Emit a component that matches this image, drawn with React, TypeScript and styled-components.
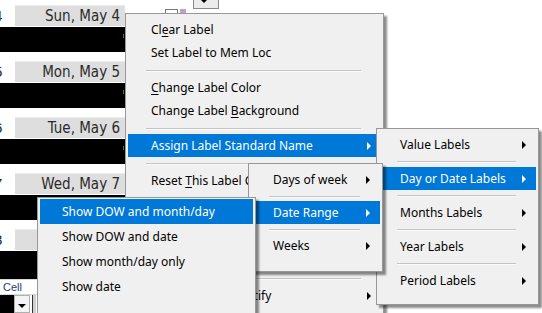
import styled, { createGlobalStyle } from "styled-components";

const GlobalStyle = createGlobalStyle`
  html, body {
    margin: 0;
    padding: 0;
    background: #fff;
  }
  body {
    font-family: "Noto Sans", sans-serif;
    overflow: hidden;
  }
`;

const Page = styled.div`
  position: relative;
  width: 542px;
  height: 313px;
  overflow: hidden;
  display: flex;
  align-items: flex-start;
`;

// left side: the schedule column behind the menus
const DayColumn = styled.div`
  width: 125px;
  padding-top: 5px;
  display: flex;
  flex-direction: column;
`;

const DayBlock = styled.div<{ $last?: boolean }>`
  display: flex;
  flex-direction: column;
  gap: 1px;
  margin-bottom: ${(p) => (p.$last ? 0 : 9)}px;
`;

const DayHeader = styled.div`
  display: flex;
  height: 21px;
`;

const DayNum = styled.div`
  width: 14px;
  overflow: hidden;
  background: #fff;
  font-family: "Liberation Sans", Arial, sans-serif;
  font-size: 15px;
  line-height: 21px;
  color: #1a2a4a;
  span {
    display: inline-block;
    margin-left: -6px;
  }
`;

const DayLabel = styled.div`
  flex: 1;
  margin-left: 1px;
  background: #dedede;
  border-top: 1px solid #ececec;
  box-sizing: border-box;
  text-align: right;
  padding-right: 5px;
  font-family: "Liberation Sans Narrow", "DejaVu Sans Condensed", Arial, sans-serif;
  font-size: 15px;
  line-height: 20px;
  color: #2a2a2a;
`;

const BlackBar = styled.div<{ $h?: number }>`
  position: relative;
  height: ${(p) => p.$h ?? 25}px;
  background: #000;
  &::after {
    content: "";
    position: absolute;
    right: 1px;
    top: 7px;
    width: 1px;
    height: 4px;
    background: #3a8a20;
  }
`;

const CellRow = styled.div`
  height: 14px;
  border-top: 1px solid #d8d8d8;
  border-bottom: 1px solid #d8d8d8;
  font-family: "Liberation Sans", Arial, sans-serif;
  font-size: 11px;
  line-height: 14px;
  padding-left: 3px;
  color: #2a3a6a;
`;

const PickRow = styled.div`
  display: flex;
  height: 18px;
`;

const PickValue = styled.div`
  width: 14px;
  background: #000;
`;

const PickButton = styled.div`
  width: 16px;
  background: #f4f4f4;
  border: 1px solid #b0b0b0;
  display: flex;
  justify-content: center;
  padding-top: 8px;
  box-sizing: border-box;
  &::before {
    content: "";
    border-top: 4px solid #000;
    border-left: 4px solid transparent;
    border-right: 4px solid transparent;
    height: 0;
  }
`;

const PickEdge = styled.div`
  width: 3px;
  margin-left: 2px;
  border-left: 1px solid #333;
  background: #cfcfcf;
`;

const TopControls = styled.div`
  display: flex;
  align-items: flex-start;
  padding-left: 40px;
`;

const CheckBox = styled.div`
  margin-top: 9px;
  width: 11px;
  height: 11px;
  border: 1px solid #777;
  background: #fff;
`;

const Swatch = styled.div`
  margin-top: 9px;
  margin-left: 2px;
  width: 6px;
  height: 10px;
  background: #c79ad0;
`;

const DropButton = styled.div`
  margin-left: 7px;
  width: 24px;
  height: 8px;
  border: 1px solid #8a8a8a;
  border-top: none;
  background: #ececec;
  display: flex;
  justify-content: center;
  &::before {
    content: "";
    margin-left: -4px;
    border-top: 3px solid #000;
    border-left: 3px solid transparent;
    border-right: 3px solid transparent;
    height: 0;
  }
`;

// context menus
const Menu = styled.div<{ $left: number; $top: number; $width: number; $height?: number; $padTop: number; $padBottom: number }>`
  position: absolute;
  left: ${(p) => p.$left}px;
  top: ${(p) => p.$top}px;
  width: ${(p) => p.$width}px;
  ${(p) => (p.$height ? `height: ${p.$height}px;` : "")}
  box-sizing: border-box;
  background: #f0f0f0;
  border: 1px solid #979797;
  box-shadow: 3px 3px 2px rgba(0, 0, 0, 0.45);
  padding: ${(p) => p.$padTop}px 2px ${(p) => p.$padBottom}px 2px;
  display: flex;
  flex-direction: column;
  font-family: "Noto Sans", "Open Sans", sans-serif;
  font-size: 12px;
  color: #000;
`;

const Item = styled.div<{ $active?: boolean; $h?: number; $indent: number }>`
  height: ${(p) => p.$h ?? 23}px;
  flex-shrink: 0;
  display: flex;
  align-items: center;
  padding-left: ${(p) => p.$indent}px;
  padding-right: 10px;
  background: ${(p) => (p.$active ? "#0078d7" : "transparent")};
  color: ${(p) => (p.$active ? "#fff" : "#000")};
  white-space: nowrap;
  u {
    text-decoration: underline;
    text-underline-offset: 2px;
  }
`;

const Label = styled.span`
  flex: 1;
`;

const Arrow = styled.span`
  width: 0;
  height: 0;
  border-left: 4px solid currentColor;
  border-top: 4px solid transparent;
  border-bottom: 4px solid transparent;
`;

const Sep = styled.div<{ $h: number }>`
  height: ${(p) => p.$h}px;
  flex-shrink: 0;
  display: flex;
  align-items: center;
  padding: 0 20px 0 18px;
  &::before {
    content: "";
    flex: 1;
    height: 1px;
    background: #c4c4c4;
    box-shadow: 0 1px 0 #fbfbfb;
  }
`;

const days = [
  { num: "4", label: "Sun, May 4" },
  { num: "5", label: "Mon, May 5" },
  { num: "6", label: "Tue, May 6" },
  { num: "7", label: "Wed, May 7" },
];

function App() {
  return (
    <>
      <GlobalStyle />
      <Page>
        <DayColumn>
          {days.map((d) => (
            <DayBlock key={d.num}>
              <DayHeader>
                <DayNum>
                  <span>{d.num}</span>
                </DayNum>
                <DayLabel>{d.label}</DayLabel>
              </DayHeader>
              <BlackBar />
            </DayBlock>
          ))}
          <DayBlock $last>
            <DayHeader>
              <DayNum>
                <span>8</span>
              </DayNum>
              <DayLabel>Thu, May 8</DayLabel>
            </DayHeader>
            <BlackBar $h={28} />
          </DayBlock>
          <CellRow>Cell</CellRow>
          <PickRow>
            <PickValue />
            <PickButton />
            <PickEdge />
          </PickRow>
        </DayColumn>

        <TopControls>
          <CheckBox />
          <Swatch />
          <DropButton />
        </TopControls>

        <Menu $left={125} $top={13} $width={259} $height={320} $padTop={4} $padBottom={4}>
          <Item $indent={23}>
            <Label>
              Cl<u>e</u>ar Label
            </Label>
          </Item>
          <Item $indent={23}>
            <Label>Set Label to Mem Loc</Label>
          </Item>
          <Sep $h={12} />
          <Item $indent={23}>
            <Label>
              <u>C</u>hange Label Color
            </Label>
          </Item>
          <Item $indent={23}>
            <Label>
              Change Label <u>B</u>ackground
            </Label>
          </Item>
          <Sep $h={12} />
          <Item $indent={23} $active>
            <Label>Assign Label Standard Name</Label>
            <Arrow />
          </Item>
          <Sep $h={12} />
          <Item $indent={23}>
            <Label>
              Reset <u>T</u>his Label Color
            </Label>
          </Item>
          <Sep $h={12} />
          <Item $indent={23}>
            <Label>Copy Label Format</Label>
          </Item>
          <Item $indent={23}>
            <Label>Paste Label Format</Label>
          </Item>
          <Item $indent={23}>
            <Label>Label Font</Label>
          </Item>
          <Sep $h={11} />
          <Item $indent={23}>
            <Label>Alignment and Justify</Label>
            <Arrow />
          </Item>
          <Sep $h={12} />
        </Menu>

        <Menu $left={376} $top={128} $width={163} $padTop={4} $padBottom={12}>
          <Item $indent={21}>
            <Label>Value Labels</Label>
            <Arrow />
          </Item>
          <Sep $h={11} />
          <Item $indent={21} $active>
            <Label>Day or Date Labels</Label>
            <Arrow />
          </Item>
          <Sep $h={11} />
          <Item $indent={21}>
            <Label>Months Labels</Label>
            <Arrow />
          </Item>
          <Sep $h={11} />
          <Item $indent={21}>
            <Label>Year Labels</Label>
            <Arrow />
          </Item>
          <Sep $h={11} />
          <Item $indent={21}>
            <Label>Period Labels</Label>
            <Arrow />
          </Item>
        </Menu>

        <Menu $left={248} $top={163} $width={135} $padTop={4} $padBottom={14}>
          <Item $indent={22}>
            <Label>Days of week</Label>
            <Arrow />
          </Item>
          <Sep $h={10} />
          <Item $indent={22} $active>
            <Label>Date Range</Label>
            <Arrow />
          </Item>
          <Sep $h={10} />
          <Item $indent={22}>
            <Label>Weeks</Label>
            <Arrow />
          </Item>
        </Menu>

        <Menu $left={37} $top={197} $width={219} $height={130} $padTop={1} $padBottom={4}>
          <Item $indent={22} $h={25} $active>
            <Label>Show DOW and month/day</Label>
          </Item>
          <Item $indent={22} $h={25}>
            <Label>Show DOW and date</Label>
          </Item>
          <Item $indent={22} $h={25}>
            <Label>Show month/day only</Label>
          </Item>
          <Item $indent={22} $h={25}>
            <Label>Show date</Label>
          </Item>
        </Menu>
      </Page>
    </>
  );
}

export default App;
